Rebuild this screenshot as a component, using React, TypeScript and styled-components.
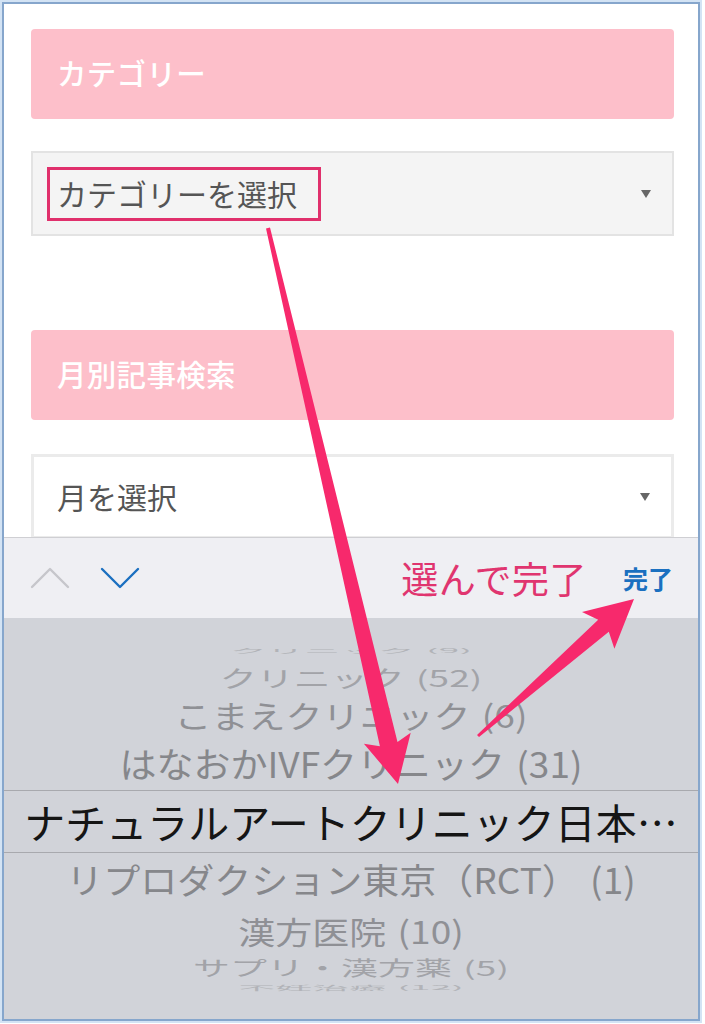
import React from 'react';
import styled, { createGlobalStyle } from 'styled-components';

const GlobalStyle = createGlobalStyle`
  html, body { margin: 0; padding: 0; background: #ffffff; }
  body {
    width: 705px;
    height: 1024px;
    overflow: hidden;
    font-family: "Noto Sans CJK JP", "Noto Sans", sans-serif;
  }
`;

const Frame = styled.div`
  position: relative;
  box-sizing: border-box;
  margin: 2px 0 0 2px;
  width: 698px;
  height: 1019px;
  border: 2px solid #86a6cc;
  box-shadow: 0 0 0 2px #d3e3f4;
  display: flex;
  flex-direction: column;
  overflow: hidden;
  background: #ffffff;
`;

const Page = styled.section`
  flex: 0 0 533px;
  box-sizing: border-box;
  padding: 25px 24px 0 27px;
  display: flex;
  flex-direction: column;
  overflow: hidden;
`;

const WidgetTitle = styled.h2<{ $gap: number }>`
  margin: ${(p) => p.$gap}px 0 0;
  flex: 0 0 90px;
  box-sizing: border-box;
  display: flex;
  align-items: center;
  padding: 0 0 4px 26px;
  border-radius: 4px;
  background: #fdbfca;
  color: #ffffff;
  font-size: 29.5px;
  font-weight: 500;
  letter-spacing: 0.3px;
`;

const SelectBox = styled.div<{ $muted?: boolean }>`
  margin-top: ${(p) => (p.$muted ? 32 : 34)}px;
  flex: 0 0 85px;
  box-sizing: border-box;
  display: flex;
  align-items: center;
  justify-content: space-between;
  padding: 0 21px 0 ${(p) => (p.$muted ? 14 : 13)}px;
  border: ${(p) => (p.$muted ? '2px solid #e3e3e3' : '3px solid #ebebeb')};
  background: ${(p) => (p.$muted ? '#f4f4f4' : '#ffffff')};
`;

const SelectLabel = styled.span<{ $boxed?: boolean }>`
  box-sizing: border-box;
  height: 54px;
  display: inline-flex;
  align-items: center;
  padding: 0 21px 2px 7px;
  border: 3px solid ${(p) => (p.$boxed ? '#e0306c' : 'transparent')};
  color: #555555;
  font-size: 30px;
  font-weight: 400;
`;

const Caret = styled.span`
  width: 0;
  height: 0;
  border-left: 5px solid transparent;
  border-right: 5px solid transparent;
  border-top: 8px solid #666666;
`;

const Toolbar = styled.div`
  flex: 0 0 81px;
  box-sizing: border-box;
  display: flex;
  align-items: center;
  padding: 0 25px 0 26px;
  background: #efeff3;
  border-top: 1px solid #cfcfd3;
`;

const NavButton = styled.button<{ $on?: boolean }>`
  border: 0;
  background: transparent;
  padding: 0;
  margin-right: 30px;
  display: flex;
  color: ${(p) => (p.$on ? '#1b6fc0' : '#c6c6cb')};
`;

const Hint = styled.span`
  margin-left: auto;
  color: #e0356f;
  font-size: 37px;
  font-weight: 400;
  letter-spacing: 0.5px;
`;

const DoneButton = styled.button`
  border: 0;
  background: transparent;
  padding: 0;
  margin-left: 36px;
  color: #1b70c0;
  font-family: inherit;
  font-size: 25px;
  font-weight: 700;
`;

const Picker = styled.div`
  flex: 1;
  min-height: 0;
  display: flex;
  flex-direction: column;
  padding-top: 20px;
  background: #d1d3d9;
`;

const Row = styled.div<{ $h: number }>`
  flex: 0 0 ${(p) => p.$h}px;
  min-height: 0;
  display: flex;
  align-items: center;
  justify-content: center;
  overflow: visible;
`;

const RowText = styled.span<{ $s: number; $c: string }>`
  display: inline-block;
  color: ${(p) => p.$c};
  font-size: 37px;
  line-height: 1;
  white-space: nowrap;
  word-spacing: 3px;
  transform: scaleY(${(p) => p.$s});
`;

const SelectedRow = styled.div`
  flex: 0 0 63px;
  min-height: 0;
  box-sizing: border-box;
  display: flex;
  align-items: center;
  justify-content: center;
  border-top: 1px solid #a8a9ae;
  border-bottom: 1px solid #a8a9ae;
  color: #151515;
  font-size: 41px;
  line-height: 1;
  white-space: nowrap;
`;

const Overlay = styled.svg`
  position: absolute;
  left: -4px;
  top: -4px;
  width: 705px;
  height: 1024px;
  pointer-events: none;
`;

const Chevron = ({ up }: { up?: boolean }) => (
  <svg width="40" height="22" viewBox="0 0 40 22" fill="none" stroke="currentColor" strokeWidth="2.4" strokeLinecap="round" strokeLinejoin="round">
    {up ? <path d="M2 20 L20 2 L38 20" /> : <path d="M2 2 L20 20 L38 2" />}
  </svg>
);

type Item = { text: string; h: number; s: number; c: string };

const above: Item[] = [
  { text: 'クリニック (9)', h: 24, s: 0.16, c: '#b2b3b8' },
  { text: 'クリニック (52)', h: 30, s: 0.6, c: '#a2a3a8' },
  { text: 'こまえクリニック (6)', h: 45, s: 0.84, c: '#8f9095' },
  { text: 'はなおかIVFクリニック (31)', h: 53, s: 0.94, c: '#86878b' },
];

const below: Item[] = [
  { text: 'リプロダクション東京（RCT） (1)', h: 52, s: 0.95, c: '#86878b' },
  { text: '漢方医院 (10)', h: 50, s: 0.84, c: '#8f9095' },
  { text: 'サプリ・漢方薬 (5)', h: 24, s: 0.55, c: '#a2a3a8' },
  { text: '不妊治療 (12)', h: 16, s: 0.16, c: '#b2b3b8' },
];

export default function App() {
  return (
    <>
      <GlobalStyle />
      <Frame>
        <Page>
          <WidgetTitle $gap={0}>カテゴリー</WidgetTitle>
          <SelectBox $muted>
            <SelectLabel $boxed>カテゴリーを選択</SelectLabel>
            <Caret />
          </SelectBox>
          <WidgetTitle $gap={94}>月別記事検索</WidgetTitle>
          <SelectBox>
            <SelectLabel>月を選択</SelectLabel>
            <Caret />
          </SelectBox>
        </Page>
        <Toolbar>
          <NavButton aria-label="前へ">
            <Chevron up />
          </NavButton>
          <NavButton $on aria-label="次へ">
            <Chevron />
          </NavButton>
          <Hint>選んで完了</Hint>
          <DoneButton>完了</DoneButton>
        </Toolbar>
        <Picker>
          {above.map((it) => (
            <Row key={it.text} $h={it.h}>
              <RowText $s={it.s} $c={it.c}>{it.text}</RowText>
            </Row>
          ))}
          <SelectedRow>ナチュラルアートクリニック日本…</SelectedRow>
          {below.map((it) => (
            <Row key={it.text} $h={it.h}>
              <RowText $s={it.s} $c={it.c}>{it.text}</RowText>
            </Row>
          ))}
        </Picker>
        <Overlay viewBox="0 0 705 1024">
          <polygon
            fill="#f7296c"
            points="270,227.5 397.5,742 410.7,732.7 398,784 363.9,743.7 379.9,746.2 266,228.5"
          />
          <polygon
            fill="#f7296c"
            points="479,737.1 608.8,631.8 614.4,648.8 634,599 582,612 598.2,619.8 477,734.9"
          />
        </Overlay>
      </Frame>
    </>
  );
}
